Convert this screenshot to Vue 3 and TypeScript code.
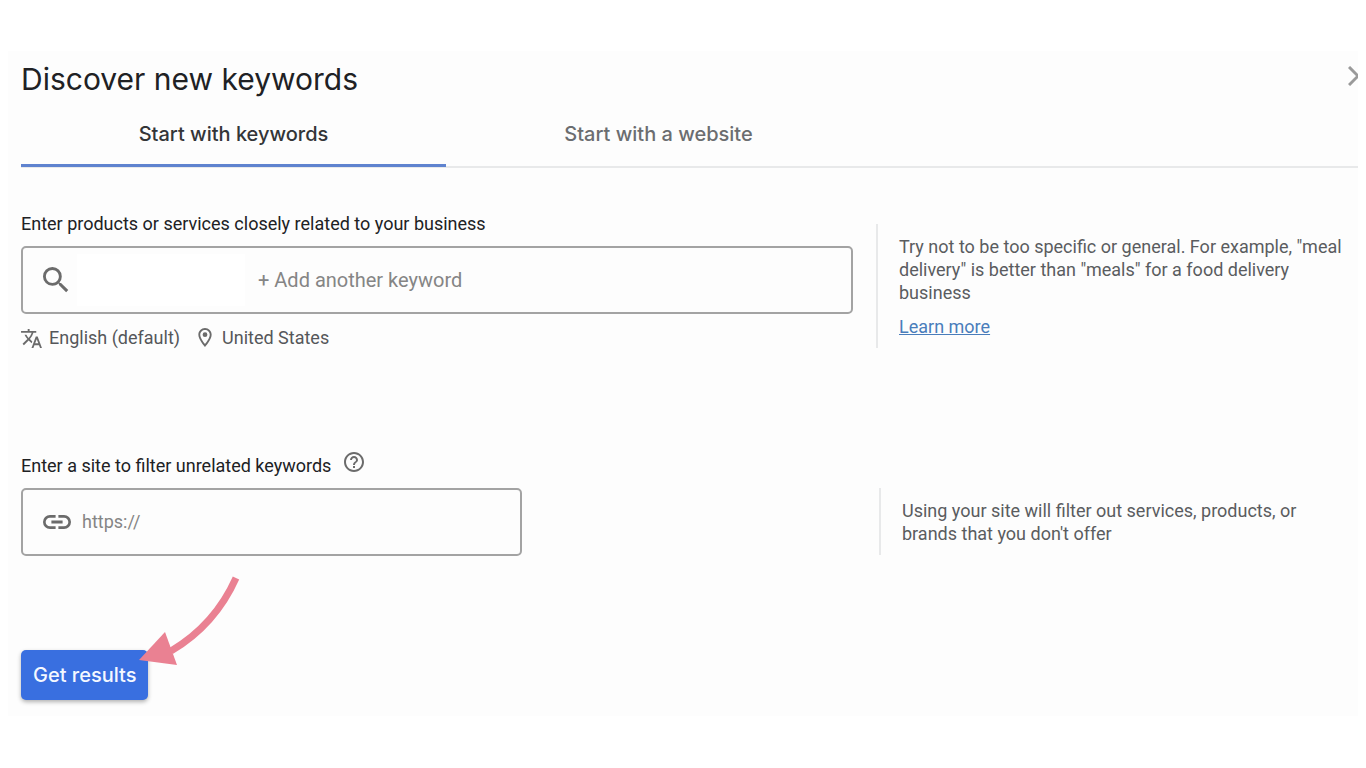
<script setup lang="ts">
import { ref } from 'vue'

type Tab = { id: string; label: string }

const tabs: Tab[] = [
  { id: 'keywords', label: 'Start with keywords' },
  { id: 'website', label: 'Start with a website' },
]
const activeTab = ref('keywords')
const keyword = ref('')
const site = ref('')
</script>

<template>
  <main class="panel">
    <header class="header">
      <h1 class="title">Discover new keywords</h1>
      <button class="close" type="button" aria-label="Close">
        <svg viewBox="0 0 20 20" width="20" height="20" fill="none" stroke="#9a9a9a" stroke-width="3">
          <path d="M1 1l18 18M19 1L1 19" />
        </svg>
      </button>
    </header>

    <div class="tabs" role="tablist">
      <button
        v-for="tab in tabs"
        :key="tab.id"
        class="tab"
        :class="{ active: tab.id === activeTab }"
        type="button"
        role="tab"
        :aria-selected="tab.id === activeTab"
        @click="activeTab = tab.id"
      >
        {{ tab.label }}
      </button>
    </div>

    <form class="form" @submit.prevent>
      <section class="row">
        <div class="field">
          <label class="label" for="keyword">Enter products or services closely related to your business</label>
          <div class="box">
            <svg class="search-icon" viewBox="3 3 18 18" width="26" height="26" fill="#6b6b6b">
              <path d="M15.5 14h-.79l-.28-.27A6.47 6.47 0 0 0 16 9.5 6.5 6.5 0 1 0 9.5 16c1.61 0 3.09-.59 4.23-1.57l.27.28v.79l5 4.99L20.49 19l-4.99-5zm-6 0C7.01 14 5 11.99 5 9.5S7.01 5 9.5 5 14 7.01 14 9.5 11.99 14 9.5 14z" />
            </svg>
            <span class="chip"></span>
            <input id="keyword" v-model="keyword" class="input" type="text" placeholder="+ Add another keyword" />
          </div>
          <div class="targeting">
            <button class="target language" type="button">
              <svg viewBox="1 2 22 20" width="21" height="19" fill="#6b6b6b">
                <path d="M12.87 15.07l-2.54-2.51.03-.03A17.52 17.52 0 0 0 14.07 6H17V4h-7V2H8v2H1v1.99h11.17C11.5 7.92 10.44 9.75 9 11.35 8.07 10.32 7.3 9.19 6.69 8h-2c.73 1.63 1.73 3.17 2.98 4.56l-5.09 5.02L4 19l5-5 3.11 3.11.76-2.04zM18.5 10h-2L12 22h2l1.12-3h4.75L21 22h2l-4.5-12zm-2.62 7l1.62-4.33L19.12 17h-3.24z" />
              </svg>
              English (default)
            </button>
            <button class="target" type="button">
              <svg class="pin" viewBox="5 2 14 20" width="14" height="19" fill="#6b6b6b">
                <path d="M12 2C8.13 2 5 5.13 5 9c0 5.25 7 13 7 13s7-7.75 7-13c0-3.87-3.13-7-7-7zM7 9c0-2.76 2.24-5 5-5s5 2.24 5 5c0 2.88-2.88 7.19-5 9.88C9.92 16.21 7 11.85 7 9z" />
                <circle cx="12" cy="9" r="2.5" />
              </svg>
              United States
            </button>
          </div>
        </div>
        <aside class="tip">
          <p>Try not to be too specific or general. For example, "meal delivery" is better than "meals" for a food delivery business</p>
          <a href="#">Learn more</a>
        </aside>
      </section>

      <section class="row site-row">
        <div class="field site-field">
          <div class="label-line">
            <label class="label" for="site">Enter a site to filter unrelated keywords</label>
            <button class="help" type="button" aria-label="Help">
              <svg viewBox="2 2 20 20" width="20" height="20" fill="#6b6b6b">
                <path d="M11 18h2v-2h-2v2zm1-16C6.48 2 2 6.48 2 12s4.48 10 10 10 10-4.48 10-10S17.52 2 12 2zm0 18c-4.41 0-8-3.59-8-8s3.59-8 8-8 8 3.59 8 8-3.59 8-8 8zm0-14c-2.21 0-4 1.79-4 4h2c0-1.1.9-2 2-2s2 .9 2 2c0 2-3 1.75-3 5h2c0-2.25 3-2.5 3-5 0-2.21-1.79-4-4-4z" />
              </svg>
            </button>
          </div>
          <div class="box">
            <svg class="link-icon" viewBox="2 7 20 10" width="28" height="14" fill="#6b6b6b">
              <path d="M3.9 12c0-1.71 1.39-3.1 3.1-3.1h4V7H7a5 5 0 0 0 0 10h4v-1.9H7c-1.71 0-3.1-1.39-3.1-3.1zM8 13h8v-2H8v2zm9-6h-4v1.9h4c1.71 0 3.1 1.39 3.1 3.1s-1.39 3.1-3.1 3.1h-4V17h4a5 5 0 0 0 0-10z" />
            </svg>
            <input id="site" v-model="site" class="input site-input" type="text" placeholder="https://" />
          </div>
        </div>
        <aside class="tip site-tip">
          <p>Using your site will filter out services, products, or brands that you don't offer</p>
        </aside>
      </section>

      <div class="actions">
        <button class="submit" type="submit">Get results</button>
        <svg class="arrow" viewBox="0 0 104 92" width="104" height="92" aria-hidden="true">
          <path d="M97 3Q76 50 32 76" fill="none" stroke="#ea8192" stroke-width="7" />
          <path d="M0 85L26 57L38 90Z" fill="#ea8192" />
        </svg>
      </div>
    </form>
  </main>
</template>

<style>
body {
  background: #fff;
}
</style>

<style scoped>
.panel {
  box-sizing: border-box;
  margin: 51px 8px;
  padding: 8px 0 16px 13px;
  overflow: hidden;
  background: #fdfdfd;
  color: #202124;
  font-family: Roboto, "Liberation Sans", sans-serif;
}
button {
  padding: 0;
  border: 0;
  background: none;
  color: inherit;
  font: inherit;
  cursor: pointer;
}
svg {
  display: block;
  flex: none;
}
.header {
  display: flex;
  align-items: center;
  justify-content: space-between;
  height: 40px;
}
.title {
  margin: 0;
  font: 400 30px/40px Inter, sans-serif;
}
.close {
  margin: 0 -10px 6px 0;
}
.tabs {
  display: flex;
  height: 69px;
  box-sizing: border-box;
  border-bottom: 2px solid #e8e9ea;
}
.tab {
  flex: 0 0 425px;
  box-sizing: border-box;
  height: 68px;
  padding-top: 4px;
  border-bottom: 3px solid transparent;
  color: #6b6d70;
  font: 500 20px/60px Inter, sans-serif;
}
.tab.active {
  border-color: #5f83cf;
  color: #333538;
}
.form {
  padding-top: 44px;
}
.row {
  display: grid;
  grid-template-columns: 832fr 482fr;
  column-gap: 23px;
}
.field {
  display: flex;
  flex-direction: column;
}
.label {
  font-size: 18px;
  line-height: 24px;
}
.box {
  display: flex;
  align-items: center;
  box-sizing: border-box;
  height: 68px;
  margin-top: 10px;
  padding: 0 20px;
  border: 2px solid #a3a3a3;
  border-radius: 5px;
}
.chip {
  flex: none;
  width: 168px;
  height: 52px;
  margin: 0 13px 0 8px;
  background: #fff;
}
.input {
  flex: 1;
  min-width: 0;
  padding: 0;
  border: 0;
  outline: 0;
  background: none;
  color: #202124;
  font: 20px/24px Roboto, sans-serif;
}
.input::placeholder {
  color: #858585;
  opacity: 1;
}
.site-input {
  font-size: 18px;
}
.link-icon {
  margin-right: 11px;
}
.targeting {
  display: flex;
  gap: 18px;
  margin-top: 12px;
}
.target {
  display: flex;
  align-items: center;
  gap: 10px;
  color: #55575a;
  font-size: 18px;
  line-height: 24px;
}
.language {
  gap: 7px;
}
.pin {
  margin-bottom: 2px;
}
.tip {
  align-self: start;
  margin-top: 12px;
  padding: 11px 12px 10px 21px;
  border-left: 2px solid #e8e9ea;
  color: #5a5c5f;
  font-size: 18px;
  line-height: 23px;
}
.tip p {
  margin: 0;
}
.tip a {
  display: inline-block;
  margin-top: 11px;
  color: #4a7dbb;
}
.site-row {
  grid-template-columns: 835fr 479fr;
  margin-top: 102px;
}
.site-field {
  max-width: 501px;
}
.label-line {
  display: flex;
  gap: 13px;
}
.label-line .label {
  padding-top: 2px;
}
.help {
  align-self: flex-start;
}
.site-tip {
  margin-top: 36px;
}
.actions {
  display: flex;
  align-items: flex-start;
  position: relative;
  padding-top: 94px;
}
.submit {
  padding: 0 12px;
  border-radius: 5px;
  background: #396fe0;
  box-shadow: 0 2px 4px rgba(0, 0, 0, 0.3);
  color: #f4f8ff;
  font: 500 20px/50px Inter, sans-serif;
}
.arrow {
  position: absolute;
  left: 118px;
  top: 19px;
  pointer-events: none;
}
</style>
